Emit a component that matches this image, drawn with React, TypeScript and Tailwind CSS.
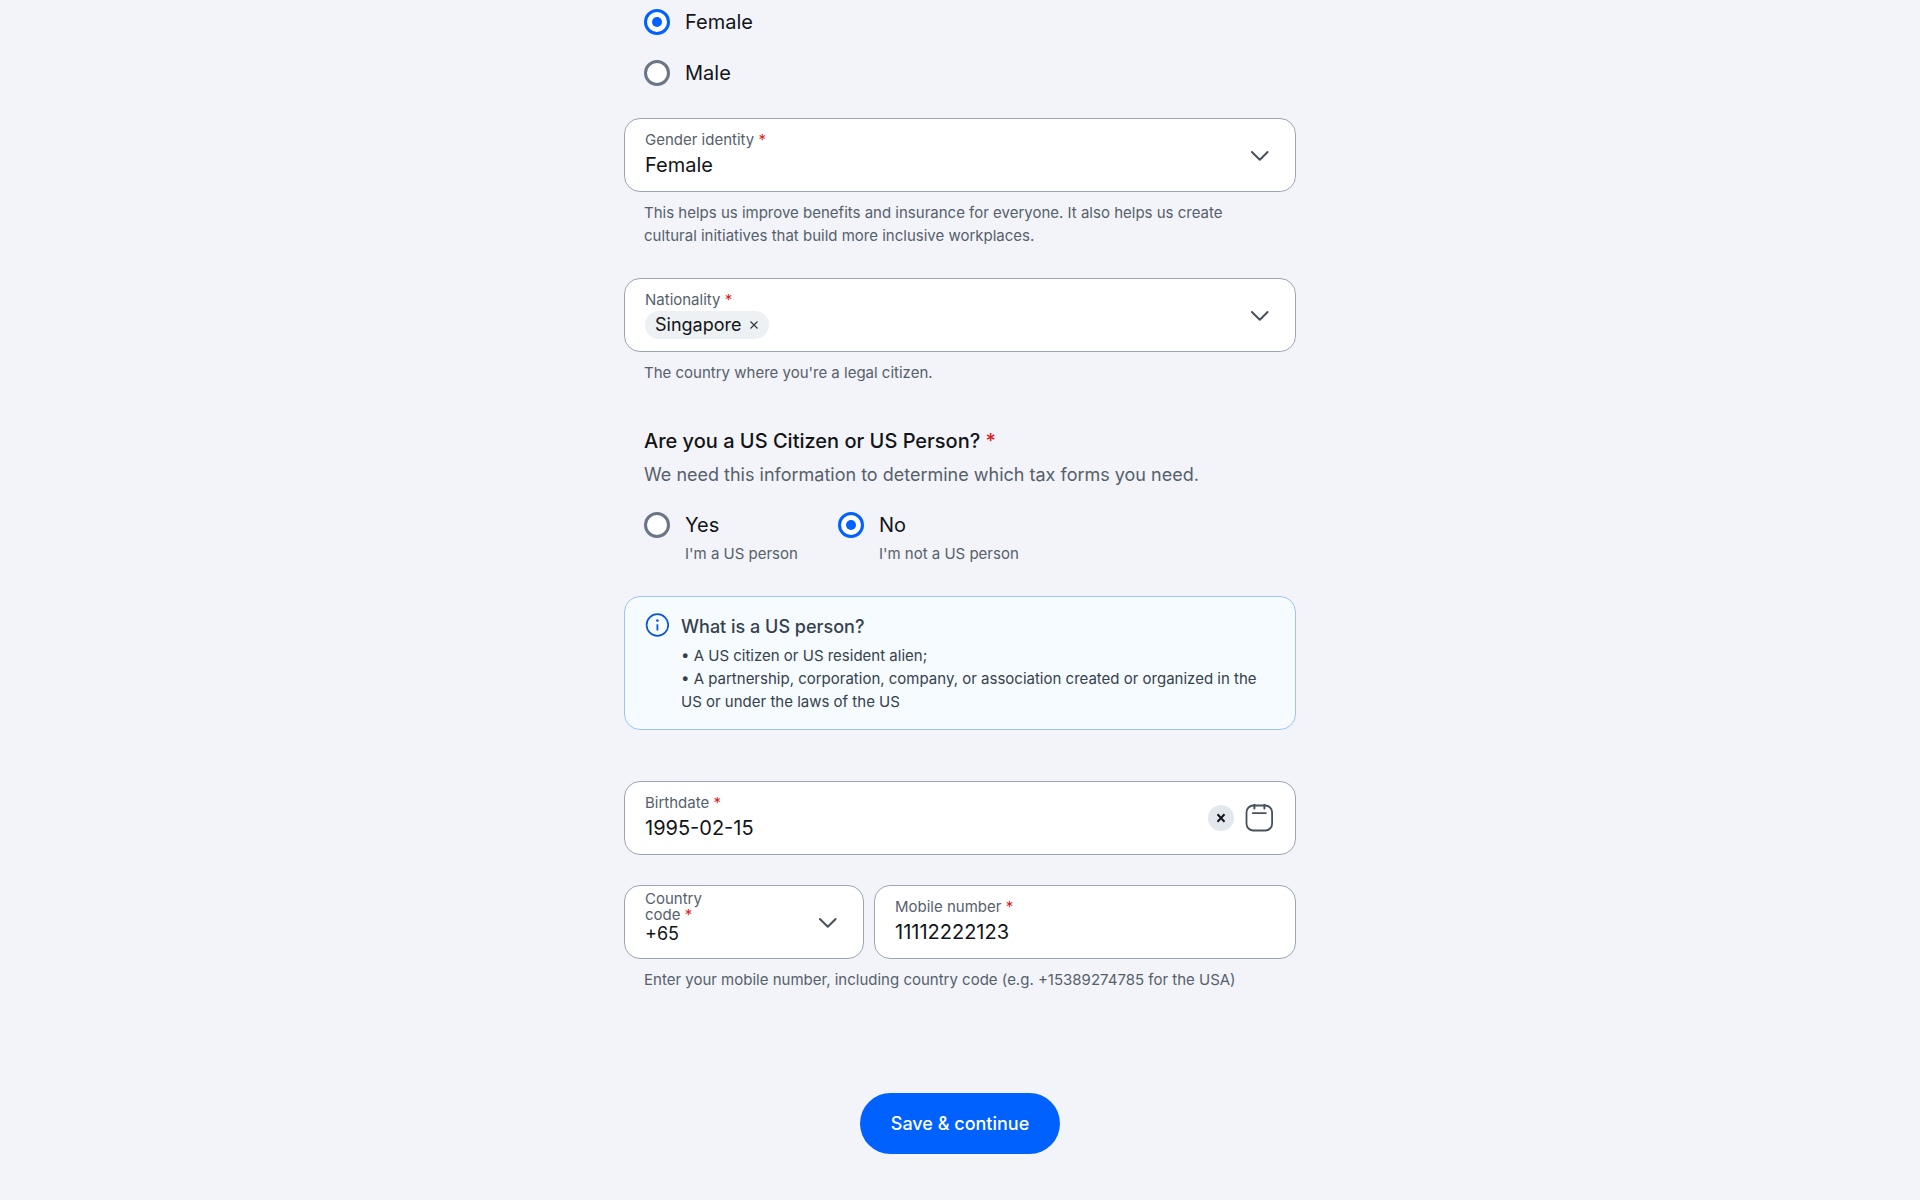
import { useState } from 'react'
import type { ReactNode } from 'react'

function Required() {
  return <span className="text-[#d9221f]">*</span>
}

function ChevronIcon() {
  return (
    <svg viewBox="0 0 28 28" className="pointer-events-none size-7 shrink-0" fill="none" aria-hidden="true">
      <path
        d="M6.9 11 14.8 18.8l7.8-7.8"
        stroke="#48525d"
        strokeWidth="2"
        strokeLinecap="round"
        strokeLinejoin="round"
      />
    </svg>
  )
}

function CalendarIcon() {
  return (
    <svg viewBox="0 0 28 28" className="size-7" fill="none" stroke="#48525d" strokeWidth="1.8" aria-hidden="true">
      <rect x="1.5" y="1.5" width="25.6" height="25" rx="6.8" />
      <path d="M7.8 9.2h13" strokeLinecap="round" />
      <path d="M9.4 0v4.4M19.4 0v4.4" strokeWidth="2" strokeLinecap="round" />
    </svg>
  )
}

function InfoIcon() {
  return (
    <svg viewBox="0 0 24 24" className="size-6 shrink-0" fill="none" aria-hidden="true">
      <circle cx="12.4" cy="12" r="10.8" stroke="#0b57d0" strokeWidth="1.7" />
      <path d="M12.4 11.3v6.2" stroke="#0b57d0" strokeWidth="1.8" />
      <circle cx="12.4" cy="7.6" r="1.3" fill="#0b57d0" />
    </svg>
  )
}

type FieldProps = {
  id: string
  label: string
  compact?: boolean
  trailing?: ReactNode
  className?: string
  children: ReactNode
}

function Field({ id, label, compact = false, trailing, className = '', children }: FieldProps) {
  return (
    <div
      className={`flex h-[74px] items-center rounded-2xl border border-[#9ba6b2] bg-white pr-[22px] pl-5 ${className}`}
    >
      <div className={`flex h-full min-w-0 grow flex-col ${compact ? 'pt-[5px]' : 'pt-[11px]'}`}>
        <label
          htmlFor={id}
          className={`text-[15px] text-[#56606b] ${compact ? 'w-20 leading-4' : 'leading-5'}`}
        >
          {label} <Required />
        </label>
        {children}
      </div>
      {trailing}
    </div>
  )
}

function HelperText({ children }: { children: ReactNode }) {
  return <p className="mt-[9px] px-5 text-[15px] leading-[23px] text-[#56606b]">{children}</p>
}

type RadioProps = {
  name: string
  label: string
  hint?: string
  checked: boolean
  onChange: () => void
}

function Radio({ name, label, hint, checked, onChange }: RadioProps) {
  return (
    <label className="flex gap-[15px]">
      <input
        type="radio"
        name={name}
        checked={checked}
        onChange={onChange}
        className="grid size-[26px] shrink-0 appearance-none place-content-center rounded-full border-3 border-[#6b7585] bg-white before:size-[10px] before:rounded-full checked:border-[#0061ff] checked:before:bg-[#0061ff]"
      />
      <span className="flex flex-col">
        <span className="text-xl leading-[27px] text-[#121417]">{label}</span>
        {hint && <span className="mt-[3px] text-[15px] leading-[23px] text-[#56606b]">{hint}</span>}
      </span>
    </label>
  )
}

export default function App() {
  const [sex, setSex] = useState('female')
  const [usPerson, setUsPerson] = useState('no')
  const [nationalities, setNationalities] = useState(['Singapore'])
  const [birthdate, setBirthdate] = useState('1995-02-15')
  const [mobile, setMobile] = useState('11112222123')

  return (
    <main className="min-h-screen bg-[#f2f4f9] px-4 pt-[9px] pb-11 font-['Inter',sans-serif] text-[#121417]">
      <form className="mx-auto flex max-w-2xl flex-col" onSubmit={(event) => event.preventDefault()}>
        <div className="flex flex-col gap-6 px-5" role="radiogroup" aria-label="Sex">
          <Radio name="sex" label="Female" checked={sex === 'female'} onChange={() => setSex('female')} />
          <Radio name="sex" label="Male" checked={sex === 'male'} onChange={() => setSex('male')} />
        </div>

        <Field id="gender" label="Gender identity" trailing={<ChevronIcon />} className="mt-[31px]">
          <select id="gender" className="h-[30px] w-full appearance-none bg-transparent text-xl outline-none">
            <option>Female</option>
          </select>
        </Field>
        <HelperText>
          This helps us improve benefits and insurance for everyone. It also helps us create cultural initiatives that
          build more inclusive workplaces.
        </HelperText>

        <Field
          id="nationality"
          label="Nationality"
          className="mt-[31px]"
          trailing={
            <button id="nationality" type="button" aria-haspopup="listbox">
              <ChevronIcon />
            </button>
          }
        >
          <div className="flex h-[30px] items-center gap-2">
            {nationalities.map((country) => (
              <span key={country} className="flex h-7 items-center gap-2 rounded-full bg-[#edf1f4] px-[10px] text-lg">
                {country}
                <button
                  type="button"
                  aria-label={`Remove ${country}`}
                  onClick={() => setNationalities(nationalities.filter((item) => item !== country))}
                >
                  <svg viewBox="0 0 10 10" className="size-[10px]" stroke="#2b333b" strokeWidth="1.1" aria-hidden="true">
                    <path d="M1.5 1.5l7 7M8.5 1.5l-7 7" />
                  </svg>
                </button>
              </span>
            ))}
          </div>
        </Field>
        <HelperText>The country where you're a legal citizen.</HelperText>

        <fieldset className="mt-[43px] px-5">
          <legend className="text-xl leading-7 font-medium">
            Are you a US Citizen or US Person? <Required />
          </legend>
          <p className="mt-[7px] text-lg leading-[26px] text-[#56606b]">
            We need this information to determine which tax forms you need.
          </p>
          <div className="mt-6 flex gap-10">
            <Radio
              name="us-person"
              label="Yes"
              hint="I'm a US person"
              checked={usPerson === 'yes'}
              onChange={() => setUsPerson('yes')}
            />
            <Radio
              name="us-person"
              label="No"
              hint="I'm not a US person"
              checked={usPerson === 'no'}
              onChange={() => setUsPerson('no')}
            />
          </div>
        </fieldset>

        <section className="mt-[31px] flex gap-3 rounded-2xl border border-[#9cc5ee] bg-[#f5fbff] px-5 py-4 text-[#36414c]">
          <InfoIcon />
          <div>
            <h2 className="text-lg leading-[27px] font-medium">What is a US person?</h2>
            <p className="mt-1 text-[15px] leading-[23px]">• A US citizen or US resident alien;</p>
            <p className="text-[15px] leading-[23px]">
              • A partnership, corporation, company, or association created or organized in the US or under the laws of
              the US
            </p>
          </div>
        </section>

        <Field
          id="birthdate"
          label="Birthdate"
          className="mt-[51px]"
          trailing={
            <div className="flex items-center gap-[11px]">
              <button
                type="button"
                aria-label="Clear birthdate"
                onClick={() => setBirthdate('')}
                className="flex size-[26px] items-center justify-center rounded-full bg-[#e3e8ee]"
              >
                <svg viewBox="0 0 10 10" className="size-[10px]" stroke="#15181c" strokeWidth="2" aria-hidden="true">
                  <path d="M1.5 1.2l7 7.6M8.5 1.2l-7 7.6" />
                </svg>
              </button>
              <button type="button" aria-label="Open calendar">
                <CalendarIcon />
              </button>
            </div>
          }
        >
          <input
            id="birthdate"
            value={birthdate}
            onChange={(event) => setBirthdate(event.target.value)}
            className="h-[30px] w-full bg-transparent text-xl outline-none"
          />
        </Field>

        <div className="mt-[30px] flex gap-[10px]">
          <Field id="country-code" label="Country code" compact trailing={<ChevronIcon />} className="w-60">
            <select id="country-code" className="h-[22px] w-full appearance-none bg-transparent text-lg leading-[22px] outline-none">
              <option>+65</option>
            </select>
          </Field>
          <Field id="mobile" label="Mobile number" className="grow">
            <input
              id="mobile"
              type="tel"
              value={mobile}
              onChange={(event) => setMobile(event.target.value)}
              className="h-[30px] w-full bg-transparent text-xl outline-none"
            />
          </Field>
        </div>
        <HelperText>Enter your mobile number, including country code (e.g. +15389274785 for the USA)</HelperText>

        <button
          type="submit"
          className="mt-[102px] self-center rounded-full bg-[#0061ff] px-[31px] py-4 text-lg leading-[29px] font-medium text-white"
        >
          Save &amp; continue
        </button>
      </form>
    </main>
  )
}
